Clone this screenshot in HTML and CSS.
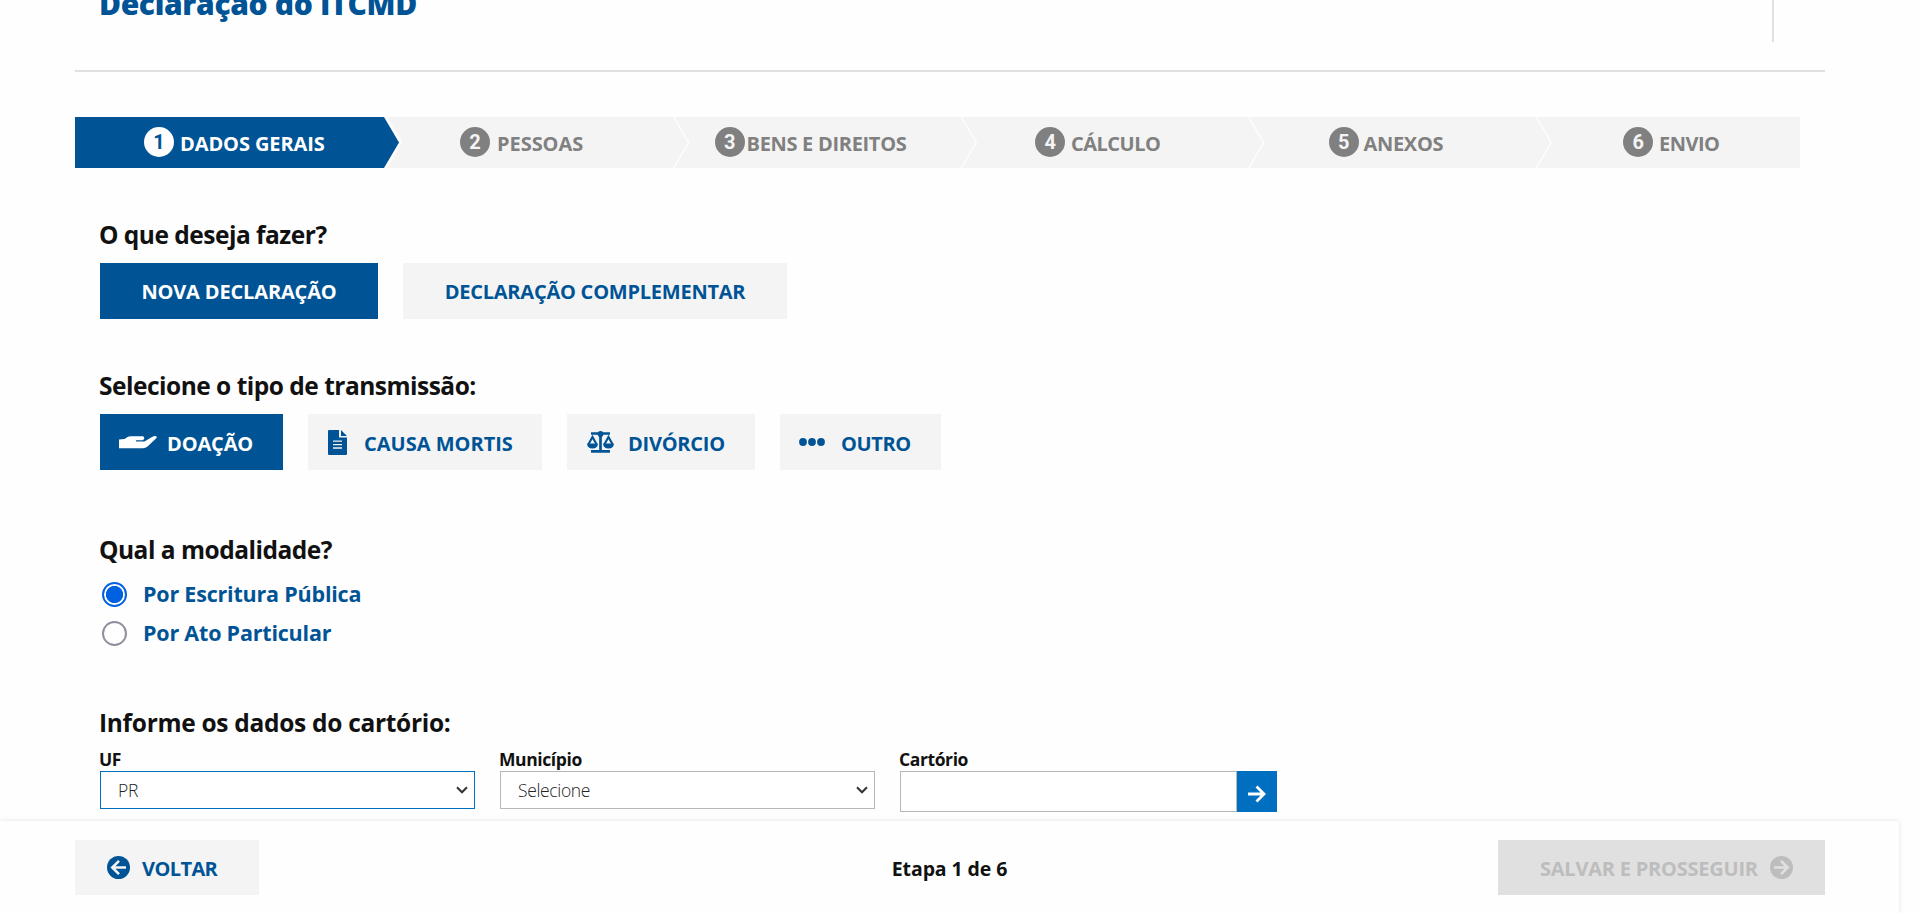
FILE: index.html
```html
<!DOCTYPE html>
<html lang="pt-BR">
<head>
<meta charset="utf-8">
<title>Declaração do ITCMD</title>
<link rel="stylesheet" href="styles.css">
</head>
<body>
<main class="page">
  <header class="page-header">
    <h1 class="page-title">Declaração do ITCMD</h1>
    <span class="header-divider"></span>
  </header>

  <ol class="steps">
    <li class="step step-1 active"><span class="num">1</span><span class="step-label">DADOS GERAIS</span></li>
    <li class="step step-2"><span class="num">2</span><span class="step-label">PESSOAS</span></li>
    <li class="step step-3"><span class="num">3</span><span class="step-label">BENS E DIREITOS</span></li>
    <li class="step step-4"><span class="num">4</span><span class="step-label">CÁLCULO</span></li>
    <li class="step step-5"><span class="num">5</span><span class="step-label">ANEXOS</span></li>
    <li class="step step-6"><span class="num">6</span><span class="step-label">ENVIO</span></li>
  </ol>

  <section class="block block-action">
    <h2 class="question">O que deseja fazer?</h2>
    <div class="options">
      <button class="btn selected w-nova"><span>NOVA DECLARAÇÃO</span></button>
      <button class="btn w-compl"><span>DECLARAÇÃO COMPLEMENTAR</span></button>
    </div>
  </section>

  <section class="block block-type">
    <h2 class="question">Selecione o tipo de transmissão:</h2>
    <div class="options">
      <button class="btn with-icon selected w-doacao">
        <svg class="ico-hand" width="38" height="13" viewBox="0 0 38 13"><path fill="currentColor" d="M0 3.600 5.500 3 9 .8Q10 .3 11.500 .3H23.500Q25.300 .5 25.300 2.300 25.100 4 23.500 4.300H17V5.600H25.500L33 1Q36-.6 37.600 .6 38.200 1.600 36.500 3L28.500 10.500Q26.500 12.200 24 12.200H0Z"/></svg>
        <span>DOAÇÃO</span>
      </button>
      <button class="btn with-icon w-causa">
        <svg class="ico-doc" width="19" height="25" viewBox="0 0 19 25"><path fill="currentColor" d="M1 0H11V7.500H19V24Q19 25 18 25H1Q0 25 0 24V1Q0 0 1 0ZM13 0 19 6H13Z"/><path stroke="#f4f4f4" stroke-width="1.300" d="M5 11.200H14M5 14.600H14M5 18H14"/></svg>
        <span>CAUSA MORTIS</span>
      </button>
      <button class="btn with-icon w-divorcio">
        <svg class="ico-scale" width="27" height="22" viewBox="0 0 27 22"><g fill="none" stroke="currentColor" stroke-width="2.100"><path d="M4 2.500H23M13.500 2V20M4 20.400H23" stroke-width="2.700"/><path d="M1.600 13 5.500 6 9.400 13M17.600 13 21.500 6 25.400 13"/></g><circle cx="13.500" cy="3" r="2.900" fill="currentColor"/><path fill="currentColor" d="M0 12.400H11Q10.600 17.500 5.500 17.500T0 12.400ZM16 12.400H27Q26.600 17.500 21.500 17.500T16 12.400Z"/></svg>
        <span>DIVÓRCIO</span>
      </button>
      <button class="btn with-icon w-outro">
        <svg class="ico-dots" width="26" height="8" viewBox="0 0 26 8"><g fill="currentColor"><circle cx="4" cy="4" r="3.900"/><circle cx="13" cy="4" r="3.900"/><circle cx="22" cy="4" r="3.900"/></g></svg>
        <span>OUTRO</span>
      </button>
    </div>
  </section>

  <section class="block block-mode">
    <h2 class="question">Qual a modalidade?</h2>
    <div class="radios">
      <label class="radio-row"><span class="radio checked"></span><span>Por Escritura Pública</span></label>
      <label class="radio-row"><span class="radio"></span><span>Por Ato Particular</span></label>
    </div>
  </section>

  <section class="block block-registry">
    <h2 class="question wide">Informe os dados do cartório:</h2>
    <div class="fields">
      <div class="field">
        <span class="field-label">UF</span>
        <div class="select focused"><span>PR</span><svg width="12" height="8" viewBox="0 0 12 8"><path d="M1 1.200 6 6.300 11 1.200" fill="none" stroke="#333" stroke-width="2"/></svg></div>
      </div>
      <div class="field">
        <span class="field-label">Município</span>
        <div class="select"><span>Selecione</span><svg width="12" height="8" viewBox="0 0 12 8"><path d="M1 1.200 6 6.300 11 1.200" fill="none" stroke="#333" stroke-width="2"/></svg></div>
      </div>
      <div class="field">
        <span class="field-label">Cartório</span>
        <div class="search"><span class="search-input"></span><span class="search-go"><svg width="18" height="18" viewBox="0 0 18 18"><path d="M0 9H16M8.500 1.500 16 9 8.500 16.500" fill="none" stroke="#fff" stroke-width="2.800"/></svg></span></div>
      </div>
    </div>
  </section>
</main>

<footer class="bar">
  <button class="bar-btn back"><svg width="23" height="23" viewBox="0 0 23 23"><circle cx="11.500" cy="11.500" r="11.500" fill="#005496"/><path d="M19 11.500H5.500M12 4.800 5.300 11.500 12 18.200" fill="none" stroke="#f4f4f4" stroke-width="2.600"/></svg><span>VOLTAR</span></button>
  <span class="progress">Etapa 1 de 6</span>
  <button class="bar-btn next"><span>SALVAR E PROSSEGUIR</span><svg width="23" height="23" viewBox="0 0 23 23"><circle cx="11.500" cy="11.500" r="11.500" fill="#bdbdbd"/><path d="M4 11.500H17.500M11 4.800 17.700 11.500 11 18.200" fill="none" stroke="#e0e0e0" stroke-width="2.600"/></svg></button>
</footer>
</body>
</html>
```
FILE: styles.css
```css
* { box-sizing: border-box; }

body {
  margin: 0;
  height: 913px;
  overflow: hidden;
  background: #fefefe;
  color: #111;
  font-family: "Open Sans", "Noto Sans", sans-serif;
}

.page { height: 821px; overflow: hidden; }

.page-header {
  display: flex;
  justify-content: space-between;
  width: 1750px;
  height: 72px;
  margin-left: 75px;
  padding: 0 51px 0 24px;
  border-bottom: 2px solid #e0e0e0;
}
.page-title {
  margin: -16px 0 0;
  font-size: 30px;
  line-height: 40px;
  font-weight: 800;
  letter-spacing: -0.35px;
  color: #005496;
}
.header-divider { width: 2px; height: 42px; background: #e0e0e0; }

.steps {
  display: flex;
  list-style: none;
  width: 1725px;
  margin: 45px 0 0 75px;
  padding: 0;
}
.step {
  display: flex;
  flex: none;
  width: 301px;
  height: 51px;
  margin-left: -13.5px;
  background: #f4f4f4;
  color: #808080;
  font-size: 20px;
  line-height: 51px;
  font-weight: 700;
  letter-spacing: -0.3px;
  clip-path: polygon(0 0, calc(100% - 15px) 0, 100% 50%, calc(100% - 15px) 100%, 0 100%, 15px 50%);
}
.step-1 {
  width: 324px;
  margin-left: 0;
  padding-left: 69px;
  letter-spacing: -0.1px;
  background: #005496;
  color: #fff;
  clip-path: polygon(0 0, calc(100% - 15px) 0, 100% 50%, calc(100% - 15px) 100%, 0 100%);
}
.step-2 { margin-left: -12px; padding-left: 73px; letter-spacing: -0.05px; }
.step-3 { padding-left: 40px; }
.step-4 { padding-left: 73px; letter-spacing: -0.5px; }
.step-5 { padding-left: 79px; }
.step-6 {
  width: 263px;
  padding-left: 86px;
  letter-spacing: -0.5px;
  clip-path: polygon(0 0, 100% 0, 100% 100%, 0 100%, 15px 50%);
}
.num {
  width: 30px;
  height: 30px;
  margin: 10px 6px 0 0;
  border-radius: 50%;
  background: #808080;
  color: #f4f4f4;
  font: 700 20px/30px Roboto, sans-serif;
  text-align: center;
}
.active .num { background: #fff; color: #005496; }
.step-2 .num { margin-right: 7px; }
.step-3 .num { margin-right: 2px; }
.step-5 .num { margin-right: 5px; }
.step-label { padding-top: 1px; }

.block { padding-left: 100px; }
.block-action { margin-top: 51px; }
.block-type { margin-top: 51px; }
.block-mode { margin-top: 64px; }
.block-registry { margin-top: 55px; }

.question {
  margin: 0 0 0 -1px;
  font-size: 24.5px;
  line-height: 32px;
  font-weight: 700;
  letter-spacing: -0.5px;
}
.question.wide { letter-spacing: -0.3px; }

.options { display: flex; gap: 25px; margin-top: 12px; }
.btn, .bar-btn {
  flex: none;
  display: flex;
  align-items: center;
  justify-content: center;
  height: 56px;
  margin: 0;
  padding: 0;
  border: 0;
  background: #f4f4f4;
  color: #005496;
  font: 700 20px/56px "Open Sans", "Noto Sans", sans-serif;
  letter-spacing: -0.15px;
}
.btn span, .bar-btn span { padding-top: 2px; }
.btn.selected { background: #005496; color: #fff; }
.btn.with-icon { justify-content: flex-start; }
.btn.with-icon span { padding-top: 3px; }
.w-nova { width: 278px; }
.w-compl { width: 384px; letter-spacing: -0.23px; }
.w-doacao { width: 183px; padding-left: 19px; }
.w-causa { width: 234px; padding-left: 20px; letter-spacing: 0; }
.w-divorcio { width: 188px; padding-left: 20px; letter-spacing: -0.25px; }
.w-outro { width: 161px; padding-left: 19px; letter-spacing: -0.4px; }
.ico-hand { margin-right: 10px; }
.ico-doc { margin: 1px 17px 0 0; }
.ico-scale { margin-right: 14px; }
.ico-dots { margin-right: 16px; }

.radios { margin-top: 8px; }
.radio-row {
  display: flex;
  align-items: center;
  height: 39px;
  padding-left: 2px;
  color: #005496;
  font-size: 21.5px;
  line-height: 41px;
  font-weight: 700;
  letter-spacing: -0.2px;
}
.radio {
  width: 25px;
  height: 25px;
  margin: 2px 16px 0 0;
  border: 2px solid #8f8f9d;
  border-radius: 50%;
  background: #fff;
}
.radio.checked {
  border-color: #0061e0;
  background: radial-gradient(circle, #0061e0 8.2px, #fff 9px);
}

.fields { display: flex; gap: 25px; margin-top: 8px; }
.field { width: 375px; }
.field-label {
  display: block;
  height: 24px;
  margin-left: -1px;
  font-size: 17.5px;
  line-height: 24px;
  font-weight: 700;
  letter-spacing: -0.4px;
}
.select {
  display: flex;
  align-items: center;
  justify-content: space-between;
  height: 38px;
  padding: 0 6px 0 17px;
  border: 1px solid #b8b8b8;
  background: #fff;
  color: #222;
  font-size: 17.5px;
  line-height: 37px;
  font-weight: 350;
  letter-spacing: -0.35px;
}
.select.focused { border-color: #006fbf; }
.search { display: flex; width: 377px; }
.search-input { width: 337px; height: 41px; border: 1px solid #b8b8b8; background: #fff; }
.search-go {
  display: flex;
  align-items: center;
  justify-content: center;
  width: 40px;
  height: 41px;
  padding-top: 4px;
  background: #006fbf;
}

.bar {
  position: relative;
  display: flex;
  justify-content: space-between;
  width: 1899px;
  height: 92px;
  padding: 19px 74px 0 75px;
  background: #fefefe;
  box-shadow: 0 0 5px rgba(0, 0, 0, 0.11);
}
.bar-btn { height: 55px; line-height: 55px; justify-content: flex-start; }
.bar-btn svg { margin-bottom: 1px; }
.back { width: 184px; padding-left: 32px; gap: 12px; letter-spacing: -0.6px; }
.next { width: 327px; padding-left: 42px; gap: 12px; letter-spacing: -0.22px; background: #e0e0e0; color: #bdbdbd; }
.progress {
  margin-left: 142px;
  font-size: 19.5px;
  line-height: 58px;
  font-weight: 700;
  letter-spacing: -0.1px;
}
```
